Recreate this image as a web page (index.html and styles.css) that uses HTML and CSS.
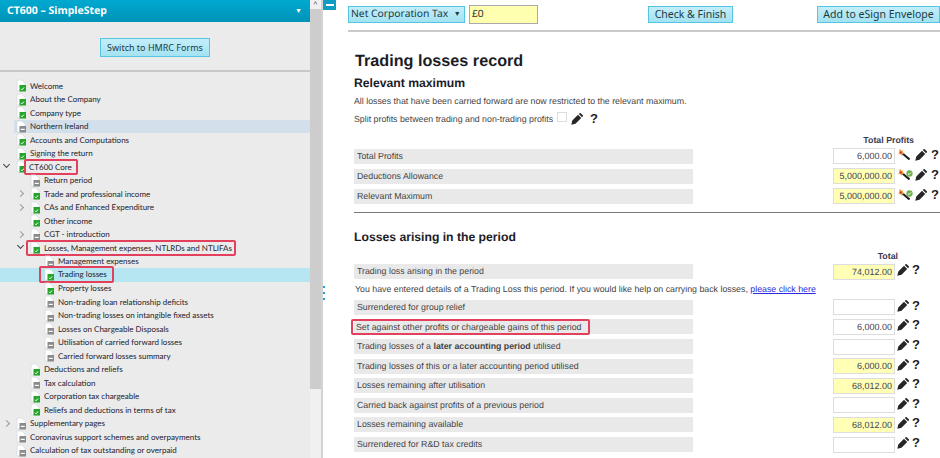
FILE: index.html
```html
<!DOCTYPE HTML>
<html>
    <head>
        <title>CT600 - Trading losses record</title>
        <meta charset="utf-8" />
        <link rel="stylesheet" href="styles.css">
    </head>
    <body>
        <svg class="defs" width="0" height="0">
            <symbol id="doc-ok" viewBox="0 0 11 13">
                <path d="M1 1h5l3 3v8H1z" fill="#fff" stroke="#d5dadd" stroke-width=".8"/>
                <rect x="3.500" y="6" width="6.500" height="6.500" fill="#25a52b"/>
                <path d="M5 9.800l1 1 2-2.300" fill="none" stroke="#fff" stroke-width="1"/>
            </symbol>
            <symbol id="doc-none" viewBox="0 0 11 13">
                <path d="M1 1h5l3 3v8H1z" fill="#fff" stroke="#d5dadd" stroke-width=".8"/>
                <rect x="3.500" y="6" width="6.500" height="6.500" fill="#8b8b8b"/>
                <rect x="4.800" y="8.800" width="4" height="1.200" fill="#fff"/>
            </symbol>
            <symbol id="pencil" viewBox="0 0 12 12">
                <path d="M.3 11.700l1-4.200 5.700-5.700 3.200 3.200-5.700 5.700zM7.800 1l.8-.8a.8.8 0 0 1 1.100 0l2.100 2.100a.8.8 0 0 1 0 1.100l-.8.800z" fill="#262626"/>
            </symbol>
            <symbol id="wand" viewBox="0 0 13 11">
                <path d="M5 4l7.500 6.500" stroke="#1e1e1e" stroke-width="2"/>
                <path d="M3.500 0l.9 1.800 2.100-.4-.9 1.900 1.700 1.500-2.300.1-.8 2.100-.9-2-2.300-.2 1.700-1.500-.7-2z" fill="#f0a63c"/>
                <circle cx="3.800" cy="3.400" r="1.200" fill="#d8342c"/>
            </symbol>
            <symbol id="tick" viewBox="0 0 8 8">
                <circle cx="4" cy="4" r="3.600" fill="#6fb04a"/>
                <path d="M2.200 4l1.300 1.300 2.300-2.500" fill="none" stroke="#fff" stroke-width="1"/>
            </symbol>
        </svg>

        <div class="app">
            <aside class="side">
                <div class="side-head">
                    <span>CT600 – SimpleStep</span>
                    <span class="side-caret">▼</span>
                </div>
                <div class="side-switch">
                    <button class="btn">Switch to HMRC Forms</button>
                </div>
                <ul class="tree">
                    <li class="lv0"><svg class="doc"><use href="#doc-ok"/></svg>Welcome</li>
                    <li class="lv0"><svg class="doc"><use href="#doc-ok"/></svg>About the Company</li>
                    <li class="lv0"><svg class="doc"><use href="#doc-ok"/></svg>Company type</li>
                    <li class="lv0 row-hover"><svg class="doc"><use href="#doc-none"/></svg>Northern Ireland</li>
                    <li class="lv0"><svg class="doc"><use href="#doc-ok"/></svg>Accounts and Computations</li>
                    <li class="lv0"><svg class="doc"><use href="#doc-ok"/></svg>Signing the return</li>
                    <li class="lv0"><i class="tw open"></i><svg class="doc"><use href="#doc-ok"/></svg><span class="mark mark-core">CT600 Core</span></li>
                    <li class="lv1"><svg class="doc"><use href="#doc-none"/></svg>Return period</li>
                    <li class="lv1"><i class="tw"></i><svg class="doc"><use href="#doc-ok"/></svg>Trade and professional income</li>
                    <li class="lv1"><i class="tw"></i><svg class="doc"><use href="#doc-ok"/></svg>CAs and Enhanced Expenditure</li>
                    <li class="lv1"><svg class="doc"><use href="#doc-ok"/></svg>Other income</li>
                    <li class="lv1"><i class="tw"></i><svg class="doc"><use href="#doc-none"/></svg>CGT - introduction</li>
                    <li class="lv1"><i class="tw open"></i><svg class="doc"><use href="#doc-ok"/></svg><span class="mark mark-icon">Losses, Management expenses, NTLRDs and NTLIFAs</span></li>
                    <li class="lv2"><svg class="doc"><use href="#doc-none"/></svg>Management expenses</li>
                    <li class="lv2 row-active"><svg class="doc"><use href="#doc-ok"/></svg><span class="mark mark-icon">Trading losses</span></li>
                    <li class="lv2"><svg class="doc"><use href="#doc-ok"/></svg>Property losses</li>
                    <li class="lv2"><svg class="doc"><use href="#doc-none"/></svg>Non-trading loan relationship deficits</li>
                    <li class="lv2"><svg class="doc"><use href="#doc-none"/></svg>Non-trading losses on intangible fixed assets</li>
                    <li class="lv2"><svg class="doc"><use href="#doc-none"/></svg>Losses on Chargeable Disposals</li>
                    <li class="lv2"><svg class="doc"><use href="#doc-none"/></svg>Utilisation of carried forward losses</li>
                    <li class="lv2"><svg class="doc"><use href="#doc-none"/></svg>Carried forward losses summary</li>
                    <li class="lv1"><svg class="doc"><use href="#doc-ok"/></svg>Deductions and reliefs</li>
                    <li class="lv1"><svg class="doc"><use href="#doc-none"/></svg>Tax calculation</li>
                    <li class="lv1"><svg class="doc"><use href="#doc-ok"/></svg>Corporation tax chargeable</li>
                    <li class="lv1"><svg class="doc"><use href="#doc-ok"/></svg>Reliefs and deductions in terms of tax</li>
                    <li class="lv0"><i class="tw"></i><svg class="doc"><use href="#doc-none"/></svg>Supplementary pages</li>
                    <li class="lv0"><svg class="doc"><use href="#doc-none"/></svg>Coronavirus support schemes and overpayments</li>
                    <li class="lv0"><svg class="doc"><use href="#doc-none"/></svg>Calculation of tax outstanding or overpaid</li>
                </ul>
            </aside>

            <div class="scrollbar">
                <div class="scroll-arrow">^</div>
                <div class="scroll-thumb"></div>
            </div>

            <div class="splitter">
                <div class="collapse"></div>
                <div class="grip"><b></b><b></b><b></b></div>
            </div>

            <main class="main">
                <div class="topbar">
                    <div class="btn tax-select">Net Corporation Tax <span class="tax-caret">▼</span></div>
                    <div class="tax-value">£0</div>
                    <button class="btn check-btn">Check &amp; Finish</button>
                    <button class="btn esign-btn">Add to eSign Envelope</button>
                </div>

                <div class="form">
                    <h1>Trading losses record</h1>
                    <h2>Relevant maximum</h2>
                    <p class="note">All losses that have been carried forward are now restricted to the relevant maximum.</p>
                    <p class="note split-line">Split profits between trading and non-trading profits
                        <span class="check"></span>
                        <svg class="ico"><use href="#pencil"/></svg>
                        <span class="help">?</span>
                    </p>

                    <div class="col-title">Total Profits</div>
                    <div class="row row-top">
                        <div class="label">Total Profits</div>
                        <div class="val">6,000.00</div>
                        <div class="tools wide"><svg class="wand"><use href="#wand"/></svg><i class="tick-gap"></i><svg class="ico"><use href="#pencil"/></svg><span class="help">?</span></div>
                    </div>
                    <div class="row row-top">
                        <div class="label">Deductions Allowance</div>
                        <div class="val calc">5,000,000.00</div>
                        <div class="tools wide"><svg class="wand"><use href="#wand"/></svg><svg class="tick"><use href="#tick"/></svg><svg class="ico"><use href="#pencil"/></svg><span class="help">?</span></div>
                    </div>
                    <div class="row row-top">
                        <div class="label">Relevant Maximum</div>
                        <div class="val calc">5,000,000.00</div>
                        <div class="tools wide"><svg class="wand"><use href="#wand"/></svg><svg class="tick"><use href="#tick"/></svg><svg class="ico"><use href="#pencil"/></svg><span class="help">?</span></div>
                    </div>

                    <hr class="rule">

                    <h2 class="losses-title">Losses arising in the period</h2>
                    <div class="col-title col-total">Total</div>

                    <div class="row">
                        <div class="label">Trading loss arising in the period</div>
                        <div class="val calc">74,012.00</div>
                        <div class="tools"><svg class="ico"><use href="#pencil"/></svg><span class="help">?</span></div>
                    </div>
                    <p class="note carry-note">You have entered details of a Trading Loss this period. If you would like help on carrying back losses, <a href="#">please click here</a></p>
                    <div class="row">
                        <div class="label">Surrendered for group relief</div>
                        <div class="val"></div>
                        <div class="tools"><svg class="ico"><use href="#pencil"/></svg><span class="help">?</span></div>
                    </div>
                    <div class="row">
                        <div class="label"><span class="mark mark-label">Set against other profits or chargeable gains of this period</span></div>
                        <div class="val">6,000.00</div>
                        <div class="tools"><svg class="ico"><use href="#pencil"/></svg><span class="help">?</span></div>
                    </div>
                    <div class="row">
                        <div class="label">Trading losses of a <b>later accounting period</b> utilised</div>
                        <div class="val"></div>
                        <div class="tools"><svg class="ico"><use href="#pencil"/></svg><span class="help">?</span></div>
                    </div>
                    <div class="row">
                        <div class="label">Trading losses of this or a later accounting period utilised</div>
                        <div class="val calc">6,000.00</div>
                        <div class="tools"><svg class="ico"><use href="#pencil"/></svg><span class="help">?</span></div>
                    </div>
                    <div class="row">
                        <div class="label">Losses remaining after utilisation</div>
                        <div class="val calc">68,012.00</div>
                        <div class="tools"><svg class="ico"><use href="#pencil"/></svg><span class="help">?</span></div>
                    </div>
                    <div class="row">
                        <div class="label">Carried back against profits of a previous period</div>
                        <div class="val"></div>
                        <div class="tools"><svg class="ico"><use href="#pencil"/></svg><span class="help">?</span></div>
                    </div>
                    <div class="row">
                        <div class="label">Losses remaining available</div>
                        <div class="val calc">68,012.00</div>
                        <div class="tools"><svg class="ico"><use href="#pencil"/></svg><span class="help">?</span></div>
                    </div>
                    <div class="row">
                        <div class="label">Surrendered for R&amp;D tax credits</div>
                        <div class="val"></div>
                        <div class="tools"><svg class="ico"><use href="#pencil"/></svg><span class="help">?</span></div>
                    </div>
                </div>
            </main>
        </div>
    </body>
</html>
```

FILE: styles.css
```css
html, body {
    margin: 0;
    height: 100%;
    overflow: hidden;
    background-color: #fff;
    text-rendering: geometricPrecision;
}

.defs {
    position: absolute;
}

.app {
    display: flex;
    height: 458px;
    font-family: "Liberation Sans", Arial, sans-serif;
    color: #333;
}

/* left panel */
.side {
    width: 310px;
    flex-shrink: 0;
    background-color: #ebebeb;
    font-family: Lato, "Noto Sans", sans-serif;
    overflow: hidden;
}

.side-head {
    display: flex;
    justify-content: space-between;
    align-items: center;
    height: 22px;
    padding: 0 8px 0 7px;
    background: linear-gradient(#00a9d0, #0093b8);
    color: #fff;
    font-family: "Noto Sans", sans-serif;
    font-size: 10.5px;
    font-weight: bold;
}

.side-caret {
    font-size: 7px;
}

.side-switch {
    display: flex;
    justify-content: center;
    align-items: flex-start;
    height: 50px;
    padding-top: 16px;
    box-sizing: border-box;
    border-bottom: 2px solid #c8c8c8;
}

.btn {
    display: block;
    border: 1px solid #55c6e2;
    background: linear-gradient(#c3eef9, #a4e2f2);
    color: #1c3a44;
    font-family: "Noto Sans", "Open Sans", sans-serif;
    padding: 0;
    box-sizing: border-box;
}

.side-switch .btn {
    width: 110px;
    height: 19px;
    font-size: 9px;
}

.tree {
    list-style: none;
    margin: 7px 0 0;
    padding: 0;
}

.tree li {
    position: relative;
    display: flex;
    align-items: center;
    height: 13.5px;
    font-size: 8px;
    color: #23232f;
    white-space: nowrap;
}

.tree .lv0 { padding-left: 16px; }
.tree .lv1 { padding-left: 30px; }
.tree .lv2 { padding-left: 44px; }

.row-hover {
    background-color: #d3e0ec;
    margin-left: 14px;
    padding-left: 2px !important;
}

.row-active {
    background-color: #b5e6f2;
}

.doc {
    width: 11px;
    height: 13px;
    margin-right: 3px;
    flex-shrink: 0;
}

.tw {
    position: absolute;
    top: 4px;
    width: 4px;
    height: 4px;
    border-top: 1px solid #9a9a9a;
    border-right: 1px solid #9a9a9a;
    transform: rotate(45deg);
}

.tw.open {
    border-color: #444;
    top: 2px;
    transform: rotate(135deg);
}

.lv0 .tw { left: 4px; }
.lv1 .tw { left: 18px; }

/* red annotation boxes drawn on the screenshot */
.mark {
    display: inline-block;
    box-sizing: border-box;
    height: 16px;
    line-height: 12px;
    border: 2px solid #e2405c;
    border-radius: 2px;
}

.mark-core {
    margin-left: -6px;
    padding: 0 4px 0 3px;
}

.mark-icon {
    margin-left: -18px;
    padding: 0 2px 0 16px;
}

.lv2 .mark-icon {
    height: 17px;
    line-height: 13px;
    margin-left: -19px;
    padding: 0 5px 0 17px;
}

.mark-label {
    line-height: 12px;
    margin-left: -6px;
    padding: 0 7px 0 3px;
    vertical-align: top;
}

/* scrollbar and splitter */
.scrollbar {
    width: 11px;
    flex-shrink: 0;
    background-color: #f0f0f0;
}

.scroll-arrow {
    height: 9px;
    font-size: 8px;
    line-height: 10px;
    text-align: center;
    color: #555;
}

.scroll-thumb {
    height: 380px;
    background-color: #cdcdcd;
}

.splitter {
    position: relative;
    width: 2px;
    flex-shrink: 0;
    background-color: #d4d4d4;
}

.collapse {
    position: absolute;
    top: 0;
    left: 2px;
    width: 13px;
    height: 10px;
    background: linear-gradient(#fff, #fff) center / 8px 2px no-repeat #0f9dc4;
}

.grip {
    position: absolute;
    top: 286px;
    left: 2px;
    display: flex;
    flex-direction: column;
    gap: 4px;
}

.grip b {
    display: block;
    width: 2px;
    height: 2px;
    background-color: #19a5cb;
}

/* main area */
.main {
    flex: 1;
    min-width: 0;
    padding-left: 25px;
    overflow: hidden;
}

.topbar {
    display: flex;
    align-items: center;
    height: 32px;
    box-sizing: border-box;
    border-bottom: 2px solid #c9c9c9;
    padding: 1px 0 3px;
}

.topbar .btn {
    flex-shrink: 0;
    height: 17px;
    font-size: 10.5px;
    line-height: 15px;
    text-align: center;
}

.tax-select {
    width: 117px;
    padding-left: 2px !important;
    text-align: left !important;
    white-space: nowrap;
    font-size: 10.3px !important;
}

.tax-caret {
    font-size: 7px;
    margin-left: 3px;
    vertical-align: 1px;
}

.tax-value {
    flex-shrink: 0;
    width: 69px;
    height: 19px;
    margin-left: 4px;
    padding-left: 2px;
    box-sizing: border-box;
    border: 1px solid #aaa;
    background-color: #ffffb0;
    font-size: 10.5px;
    line-height: 17px;
}

.check-btn {
    width: 85px;
    margin-left: 110px;
}

.esign-btn {
    width: 123px;
    margin-left: 84px;
}

.form {
    padding-left: 6px;
}

h1 {
    margin: 19px 0 0 1px;
    font-size: 16.2px;
    line-height: 20px;
    color: #1c1c26;
}

h2 {
    margin: 4px 0 0;
    font-size: 12.2px;
    line-height: 16px;
    color: #1c1c26;
}

.note {
    margin: 4px 0 0;
    font-size: 8.8px;
    line-height: 12px;
    color: #444;
}

.split-line {
    display: flex;
    align-items: center;
    gap: 4px;
    margin-top: 6px;
    height: 12px;
}

.check {
    width: 8px;
    height: 8px;
    border: 1px solid #ddd;
    background-color: #fff;
    margin-top: -4px;
}

.col-title {
    margin-top: 9px;
    width: 560px;
    text-align: right;
    font-size: 8.8px;
    font-weight: bold;
    line-height: 12px;
    color: #3b3b50;
}

.col-total {
    margin-top: 5px;
    width: 544px;
}

.row {
    display: flex;
    align-items: center;
    height: 19.6px;
}

.row-top {
    height: 20px;
}

.label {
    flex-shrink: 0;
    width: 339px;
    height: 15px;
    padding-left: 3px;
    box-sizing: border-box;
    background-color: #e9e9e9;
    font-size: 8.8px;
    line-height: 15px;
    color: #444;
    white-space: nowrap;
}

.val {
    flex-shrink: 0;
    width: 62px;
    height: 16px;
    margin-left: 140px;
    padding-right: 2px;
    box-sizing: border-box;
    border: 1px solid #ddd;
    background-color: #fff;
    font-size: 9px;
    line-height: 14px;
    text-align: right;
    color: #445;
}

.val.calc {
    background-color: #ffffb5;
}

.tools {
    display: flex;
    flex-shrink: 0;
    align-items: center;
    margin-left: 2px;
    margin-top: -3px;
}

.ico {
    width: 12px;
    height: 12px;
}

.wand {
    width: 13px;
    height: 11px;
    margin-right: -1px;
}

.tick {
    width: 7px;
    height: 7px;
    margin-left: -3px;
    margin-right: 2px;
    margin-top: -3px;
}

.tick-gap {
    width: 6px;
}

.help {
    font-family: "Liberation Sans", Arial, sans-serif;
    font-size: 13px;
    font-weight: bold;
    line-height: 12px;
    color: #222;
    margin-left: 3px;
}

.tools.wide .help {
    margin-left: 4px;
}

.rule {
    margin: 6px 0 0;
    border: 0;
    border-top: 1px solid #777;
}

.losses-title {
    margin-top: 16px;
}

.carry-note {
    margin: -1px 0 1px;
    height: 16px;
    line-height: 16px;
    white-space: nowrap;
    padding-left: 1px;
}

a {
    color: #2a2ae0;
}
```
